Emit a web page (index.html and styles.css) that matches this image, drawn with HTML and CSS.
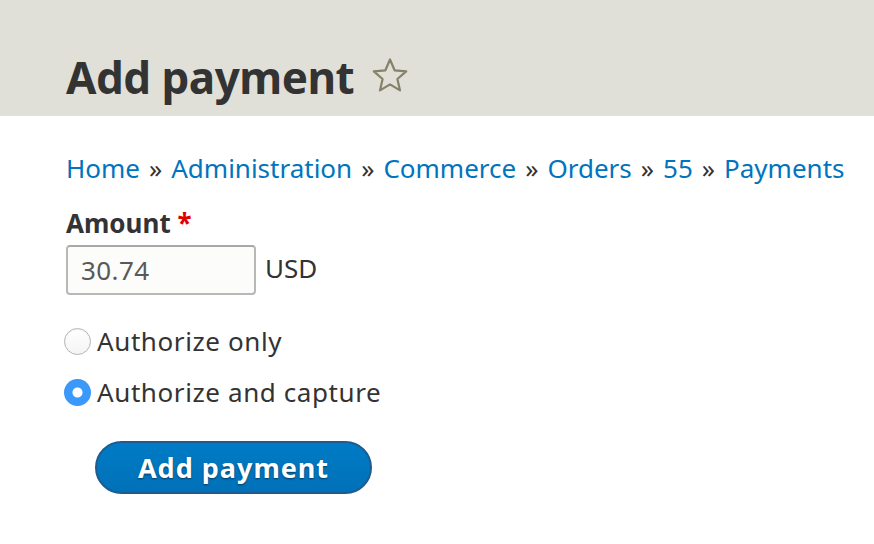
FILE: index.html
```html
<!DOCTYPE html>
<html>
<head>
<meta charset="utf-8">
<link rel="stylesheet" href="styles.css">
</head>
<body>
<header class="page-header">
  <h1 class="page-title">Add payment</h1>
  <svg class="shortcut-star" width="38" height="38" viewBox="0 0 38 38">
    <path d="M19 2.5 L23.6 13.3 L35.2 14.3 L26.4 22 L29 33.4 L19 27.4 L9 33.4 L11.6 22 L2.8 14.3 L14.4 13.3 Z" fill="none" stroke="#858269" stroke-width="2.2" stroke-linejoin="round"/>
  </svg>
</header>
<main class="content">
  <nav class="breadcrumb">
    <a href="#">Home</a><span class="sep">»</span><a href="#">Administration</a><span class="sep">»</span><a href="#">Commerce</a><span class="sep">»</span><a href="#">Orders</a><span class="sep">»</span><a href="#">55</a><span class="sep">»</span><a href="#">Payments</a>
  </nav>
  <form class="payment-form">
    <div class="field">
      <label class="field-label">Amount <span class="required">*</span></label>
      <div class="amount-row">
        <div class="text-input">30.74</div>
        <span class="currency">USD</span>
      </div>
    </div>
    <div class="radios">
      <div class="radio-item"><span class="radio"></span><span class="radio-label">Authorize only</span></div>
      <div class="radio-item"><span class="radio checked"></span><span class="radio-label">Authorize and capture</span></div>
    </div>
    <div class="actions">
      <button type="button" class="button-primary">Add payment</button>
    </div>
  </form>
</main>
</body>
</html>
```
FILE: styles.css
```css
html, body {
  margin: 0;
  padding: 0;
  background: #ffffff;
}
body {
  font-family: "Noto Sans", "DejaVu Sans", sans-serif;
  color: #333333;
  width: 874px;
  overflow: hidden;
}
.page-header {
  background: #e0e0d8;
  height: 116px;
  box-sizing: border-box;
  padding: 52px 0 0 66px;
  display: flex;
  align-items: flex-start;
  gap: 17px;
}
.page-title {
  margin: 0;
  font-size: 44px;
  line-height: 50px;
  font-weight: bold;
  letter-spacing: -0.5px;
  color: #333333;
}
.shortcut-star {
  margin-top: 5px;
}
.content {
  padding: 0 0 0 66px;
}
.breadcrumb {
  margin-top: 36px;
  font-size: 26px;
  line-height: 32px;
  white-space: nowrap;
}
.breadcrumb a {
  color: #0074bd;
  text-decoration: none;
}
.breadcrumb .sep {
  color: #333333;
  margin: 0 9px;
}
.payment-form {
  margin-top: 23px;
}
.field-label {
  display: block;
  font-size: 26px;
  line-height: 32px;
  font-weight: bold;
  color: #333333;
}
.required {
  color: #e00000;
}
.amount-row {
  margin-top: 6px;
  display: flex;
  align-items: center;
  gap: 9px;
}
.text-input {
  width: 190px;
  height: 50px;
  box-sizing: border-box;
  border: 2px solid #b8b8b8;
  border-top-color: #a8a8a8;
  border-radius: 4px;
  background: #fcfcfa;
  font-size: 26px;
  line-height: 46px;
  padding-left: 13px;
  letter-spacing: 0.4px;
  color: #595959;
}
.currency {
  font-size: 26px;
  color: #333333;
  margin-bottom: 4px;
}
.radios {
  margin-top: 30px;
  display: flex;
  flex-direction: column;
  gap: 19px;
  margin-left: -2px;
}
.radio-item {
  display: flex;
  align-items: center;
  gap: 6px;
}
.radio {
  width: 27px;
  height: 27px;
  box-sizing: border-box;
  border-radius: 50%;
  border: 1px solid #b4b4b4;
  background: linear-gradient(#ffffff, #f4f4f4);
  box-shadow: inset 0 1px 1px rgba(0,0,0,0.05);
}
.radio.checked {
  border: none;
  background: radial-gradient(circle, #ffffff 0, #ffffff 4.5px, #3b99fc 5.5px);
}
.radio-label {
  font-size: 26px;
  line-height: 32px;
  letter-spacing: 0.6px;
  color: #333333;
}
.actions {
  margin-top: 33px;
  padding-left: 29px;
}
.button-primary {
  width: 277px;
  height: 53px;
  border-radius: 27px;
  border: 2px solid #1e5c90;
  background: linear-gradient(#007bc6, #0071b8);
  color: #ffffff;
  font-family: "Noto Sans", "DejaVu Sans", sans-serif;
  font-size: 27px;
  font-weight: bold;
  letter-spacing: 1px;
  text-shadow: 0 1px 2px rgba(0,0,0,0.5);
  padding: 0;
  cursor: pointer;
}
```
